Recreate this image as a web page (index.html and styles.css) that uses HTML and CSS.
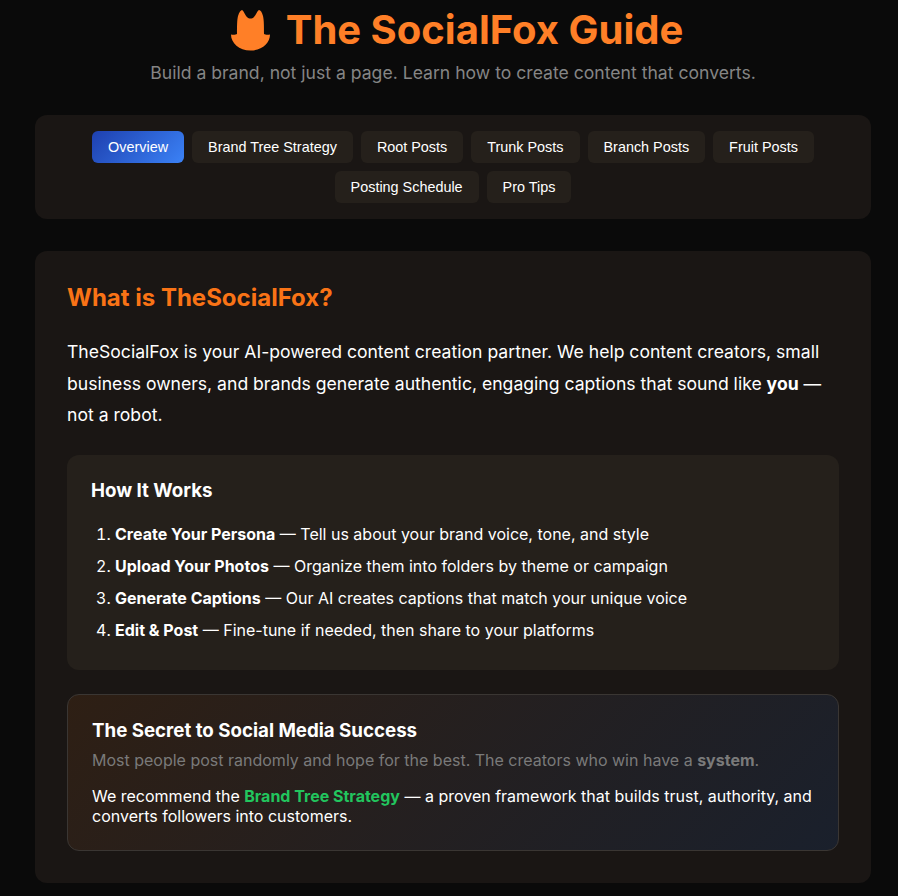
FILE: index.html
```html
<!DOCTYPE html>
<html lang="en">
<head>
  <meta charset="UTF-8" />
  <meta name="viewport" content="width=device-width, initial-scale=1.0" />
  <title>The SocialFox Guide</title>
  <link rel="stylesheet" href="styles.css">
</head>

<body>
  <div class="container">
    <header>
      <h1 class="title">
        <svg class="fox" viewBox="0 0 40 41" aria-hidden="true">
          <path d="M0 24.5 C3 25 5 24.5 6 24 C6 17 6 10 7 6 C8 2 10 0 11 0 C13 1 14 5 16 7 C18 9 21 9 23 7 C25 5 26 1 28 0 C29.500 0 31 2 32 6 C33 10 33 17 33 24 C34 24.500 36 25 39 24.500 C39 33 31 40.500 19.500 40.500 C8 40.500 0 33 0 24.500 Z" />
        </svg>
        The SocialFox Guide
      </h1>
      <p class="tagline">Build a brand, not just a page. Learn how to create content that converts.</p>
    </header>

    <nav class="tabs">
      <button class="tab active">Overview</button>
      <button class="tab">Brand Tree Strategy</button>
      <button class="tab">Root Posts</button>
      <button class="tab">Trunk Posts</button>
      <button class="tab">Branch Posts</button>
      <button class="tab">Fruit Posts</button>
      <button class="tab">Posting Schedule</button>
      <button class="tab">Pro Tips</button>
    </nav>

    <main class="panel">
      <h2>What is TheSocialFox?</h2>
      <p class="intro">TheSocialFox is your AI-powered content creation partner. We help content creators, small business owners, and brands generate authentic, engaging captions that sound like <strong>you</strong> — not a robot.</p>

      <section class="how">
        <h3>How It Works</h3>
        <ol>
          <li><strong>Create Your Persona</strong> — Tell us about your brand voice, tone, and style</li>
          <li><strong>Upload Your Photos</strong> — Organize them into folders by theme or campaign</li>
          <li><strong>Generate Captions</strong> — Our AI creates captions that match your unique voice</li>
          <li><strong>Edit &amp; Post</strong> — Fine-tune if needed, then share to your platforms</li>
        </ol>
      </section>

      <section class="secret">
        <h3>The Secret to Social Media Success</h3>
        <p class="muted">Most people post randomly and hope for the best. The creators who win have a <strong>system</strong>.</p>
        <p>We recommend the <strong class="green">Brand Tree Strategy</strong> — a proven framework that builds trust, authority, and converts followers into customers.</p>
      </section>
    </main>
  </div>
</body>
</html>
```

FILE: styles.css
```css
html {
  overflow: hidden;
}

body {
  margin: 0;
  background-color: #0a0a0a;
  color: #fff;
  font-family: "Inter", "Liberation Sans", sans-serif;
}

.container {
  width: 836px;
  margin-left: 35px;
}

header {
  text-align: center;
  margin-bottom: 28px;
}

.title {
  margin: 0;
  padding-top: 6px;
  padding-left: 8px;
  display: flex;
  justify-content: center;
  align-items: center;
  gap: 15px;
  font-size: 40px;
  line-height: 48px;
  font-weight: 700;
  color: #ff7f27;
}

.fox {
  width: 40px;
  height: 41px;
  fill: #ff7f27;
}

.tagline {
  margin: 5px 0 0;
  font-size: 17.6px;
  line-height: 28px;
  color: #858585;
}

.tabs {
  display: flex;
  flex-wrap: wrap;
  justify-content: center;
  gap: 8px;
  padding: 16px;
  background-color: #1a1614;
  border-radius: 12px;
  margin-bottom: 32px;
}

.tab {
  height: 32px;
  padding: 0 16px;
  border: none;
  border-radius: 6px;
  background-color: #25201b;
  color: #fff;
  font-family: "Liberation Sans", Arial, sans-serif;
  font-size: 14.4px;
}

.tab.active {
  background: linear-gradient(135deg, #1e40af, #3b82f6);
}

.panel {
  padding: 32px;
  background-color: #1a1614;
  border-radius: 12px;
}

h2 {
  margin: 0 0 23px;
  font-size: 24px;
  line-height: 30px;
  font-weight: 700;
  color: #f97316;
}

.intro {
  margin: 0 0 24px;
  font-size: 17.6px;
  line-height: 31.5px;
}

.how {
  padding: 24px;
  background-color: #25201b;
  border-radius: 12px;
  margin-bottom: 24px;
}

.how h3 {
  margin: 0 0 16px;
  font-size: 18.72px;
  line-height: 23px;
  font-weight: 700;
}

ol {
  margin: 0;
  padding-left: 24px;
}

li {
  font-size: 16px;
  line-height: 24px;
  padding: 4px 0;
}

strong {
  font-weight: 700;
}

.secret {
  padding: 24px;
  border: 1px solid #3a3633;
  border-radius: 12px;
  background: linear-gradient(135deg, #2e1f14, #1a202c);
}

.secret h3 {
  margin: 0 0 6px;
  font-size: 18.72px;
  line-height: 23px;
  font-weight: 700;
}

.secret p {
  margin: 0;
  font-size: 16px;
  line-height: 20px;
}

.secret .muted {
  color: #7a7a7a;
  line-height: 24px;
  margin-bottom: 14px;
}

.green {
  color: #22c55e;
}
```
